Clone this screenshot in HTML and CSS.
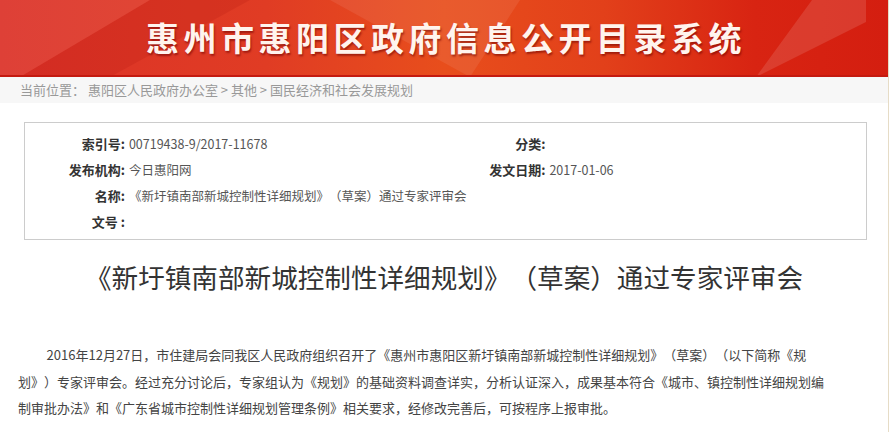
FILE: index.html
```html
<!DOCTYPE html>
<html lang="zh-CN">

<head>
    <meta charset="UTF-8">
    <meta name="viewport" content="width=device-width, initial-scale=1.0">
    <title>惠州市惠阳区政府信息公开目录系统</title>
    <link rel="stylesheet" href="styles.css">
</head>

<body>
    <div class="page">
        <div class="banner">
            <div class="facet facet-a"></div>
            <div class="facet facet-b"></div>
            <div class="facet facet-c"></div>
            <div class="facet facet-d"></div>
            <h1 class="banner-title">惠州市惠阳区政府信息公开目录系统</h1>
        </div>

        <div class="crumbs">当前位置：&nbsp;惠阳区人民政府办公室 &gt; 其他 &gt; 国民经济和社会发展规划</div>

        <div class="meta">
            <div class="meta-row">
                <span class="meta-label">索引号:</span>
                <span class="meta-value">00719438-9/2017-11678</span>
                <span class="meta-label">分类:</span>
                <span class="meta-value"></span>
            </div>
            <div class="meta-row">
                <span class="meta-label">发布机构:</span>
                <span class="meta-value">今日惠阳网</span>
                <span class="meta-label">发文日期:</span>
                <span class="meta-value">2017-01-06</span>
            </div>
            <div class="meta-row">
                <span class="meta-label">名称:</span>
                <span class="meta-value wide">《新圩镇南部新城控制性详细规划》（草案）通过专家评审会</span>
            </div>
            <div class="meta-row">
                <span class="meta-label">文号 :</span>
                <span class="meta-value wide"></span>
            </div>
        </div>

        <h2 class="doc-title">《新圩镇南部新城控制性详细规划》（草案）通过专家评审会</h2>

        <div class="doc-body">
            <p>2016年12月27日，市住建局会同我区人民政府组织召开了《惠州市惠阳区新圩镇南部新城控制性详细规划》（草案）（以下简称《规<br>划》）专家评审会。经过充分讨论后，专家组认为《规划》的基础资料调查详实，分析认证深入，成果基本符合《城市、镇控制性详细规划编<br>制审批办法》和《广东省城市控制性详细规划管理条例》相关要求，经修改完善后，可按程序上报审批。</p>
        </div>
    </div>
</body>

</html>
```

FILE: styles.css
```css
* {
    margin: 0;
    padding: 0;
    box-sizing: border-box;
}

body {
    background: #fff;
    font-family: "Noto Sans CJK SC", "Noto Sans", sans-serif;
    color: #333;
    text-spacing-trim: space-all;
}

.page {
    width: 889px;
    height: 432px;
    border-right: 1px solid #e6dcc6;
    overflow: hidden;
}

.banner {
    position: relative;
    height: 77px;
    background: linear-gradient(90deg, #dc3228 0%, #e03c24 30%, #e84e1c 50%, #e2401a 68%, #d82412 85%, #d41e10 100%);
    border-bottom: 2px solid #c41a10;
    display: flex;
    align-items: center;
    justify-content: center;
    overflow: hidden;
}

.facet {
    position: absolute;
    top: 0;
    left: 0;
    width: 100%;
    height: 100%;
}

.facet-a {
    background: rgba(255, 255, 255, 0.07);
    clip-path: polygon(0 0, 150px 0, 20px 77px, 0 77px);
}

.facet-b {
    background: rgba(150, 0, 0, 0.12);
    clip-path: polygon(150px 0, 250px 0, 110px 77px, 20px 77px);
}

.facet-c {
    background: rgba(255, 255, 255, 0.08);
    clip-path: polygon(330px 0, 520px 0, 470px 77px);
}

.facet-d {
    background: rgba(255, 255, 255, 0.12);
    clip-path: polygon(756px 77px, 812px 0, 866px 0, 866px 22px);
}

.banner-title {
    position: relative;
    font-size: 33px;
    font-weight: 700;
    letter-spacing: 4.5px;
    color: #fff4ee;
    text-shadow: 1px 2px 2px rgba(110, 0, 0, 0.55);
    margin: 0 0 2px 4px;
}

.crumbs {
    height: 26px;
    line-height: 25px;
    background: #f7f7f7;
    padding-left: 20px;
    font-size: 13px;
    color: #999;
}

.meta {
    margin: 19px 0 0 24px;
    width: 843px;
    height: 118px;
    border: 1px solid #ccc;
    padding-top: 7px;
}

.meta-row {
    display: flex;
    height: 26px;
    align-items: center;
    font-size: 13px;
}

.meta-label {
    width: 100px;
    text-align: right;
    font-weight: 700;
    color: #333;
}

.meta-value {
    width: 321px;
    padding-left: 4px;
    font-size: 12.5px;
    color: #555;
}

.meta-value.wide {
    width: 600px;
}

.doc-title {
    margin-top: 19px;
    text-align: center;
    font-size: 26.6px;
    font-weight: 400;
    color: #333;
    line-height: 36px;
}

.doc-body {
    margin-top: 47px;
    padding-left: 18px;
    font-size: 13px;
    line-height: 26.5px;
    color: #444;
}

.doc-body p {
    text-indent: 2.2em;
    white-space: nowrap;
}
```
